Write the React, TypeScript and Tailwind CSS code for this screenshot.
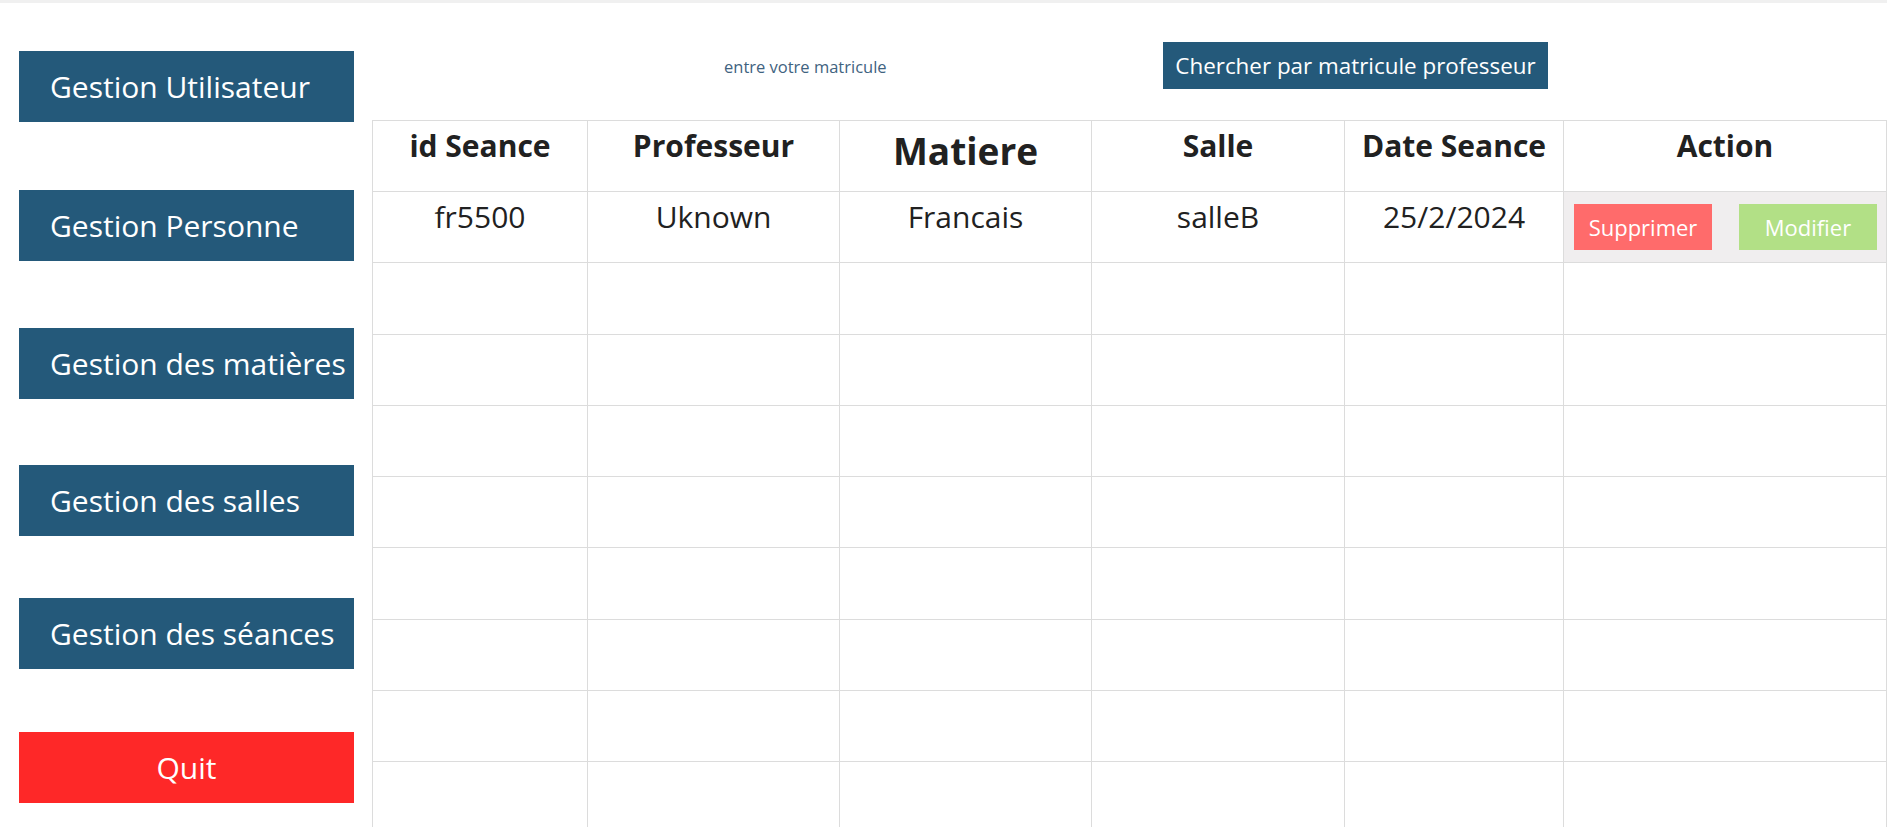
import React from 'react';

const navItems = [
  { label: 'Gestion Utilisateur', mt: 'mt-[48px]' },
  { label: 'Gestion Personne', mt: 'mt-[68px]' },
  { label: 'Gestion des matières', mt: 'mt-[67px]' },
  { label: 'Gestion des salles', mt: 'mt-[66px]' },
  { label: 'Gestion des séances', mt: 'mt-[62px]' },
];

const headers = ['id Seance', 'Professeur', 'Matiere', 'Salle', 'Date Seance', 'Action'];
const widths = ['w-[215px]', 'w-[252px]', 'w-[252px]', 'w-[253px]', 'w-[219px]', 'w-[323px]'];

const seances = [{ id: 'fr5500', prof: 'Uknown', matiere: 'Francais', salle: 'salleB', date: '25/2/2024' }];

const App: React.FC = () => {
  return (
    <div className="min-h-screen bg-white font-['Open_Sans',sans-serif] text-[#212121] overflow-hidden">
      <div className="h-[3px] bg-[#f0f0f0]" />
      <div className="flex">
        {/* sidebar */}
        <aside className="w-[372px] shrink-0 flex flex-col">
          {navItems.map((item) => (
            <button
              key={item.label}
              className={`${item.mt} ml-[19px] w-[335px] h-[71px] bg-[#24597a] text-white text-[30px] text-left pl-[31px] whitespace-nowrap`}
            >
              {item.label}
            </button>
          ))}
          <button className="mt-[63px] ml-[19px] w-[335px] h-[71px] bg-[#fe2828] text-white text-[30px] text-center">
            Quit
          </button>
        </aside>

        {/* main */}
        <main className="flex-1">
          <div className="h-[117px] flex items-start">
            <input
              readOnly
              placeholder="entre votre matricule"
              className="mt-[52px] ml-[352px] w-[180px] h-[24px] text-[16.5px] outline-none bg-transparent placeholder:text-[#3f6380]"
            />
            <button className="mt-[39px] ml-[259px] w-[385px] h-[47px] bg-[#24597a] text-white text-[22.4px] whitespace-nowrap">
              Chercher par matricule professeur
            </button>
          </div>

          <table className="border-collapse table-fixed w-[1514px]">
            <thead>
              <tr className="h-[71px]">
                {headers.map((h, i) => (
                  <th
                    key={h}
                    className={`${widths[i]} border border-[#dcdcdc] align-top font-bold leading-normal ${
                      h === 'Matiere' ? 'text-[37px] pt-[2px]' : 'text-[30px] pt-[2px]'
                    }`}
                  >
                    {h}
                  </th>
                ))}
              </tr>
            </thead>
            <tbody>
              {seances.map((s) => (
                <tr key={s.id} className="h-[71.3px]">
                  <td className="border border-[#dcdcdc] align-top text-center text-[30px] pt-[2px] leading-normal">{s.id}</td>
                  <td className="border border-[#dcdcdc] align-top text-center text-[30px] pt-[2px] leading-normal">{s.prof}</td>
                  <td className="border border-[#dcdcdc] align-top text-center text-[30px] pt-[2px] leading-normal">{s.matiere}</td>
                  <td className="border border-[#dcdcdc] align-top text-center text-[30px] pt-[2px] leading-normal">{s.salle}</td>
                  <td className="border border-[#dcdcdc] align-top text-center text-[30px] pt-[2px] leading-normal">{s.date}</td>
                  <td className="border border-[#dcdcdc] align-top bg-[#f0eeef] pt-[12px] pl-[10px]">
                    <div className="flex gap-[27px]">
                      <button className="w-[138px] h-[46px] bg-[#ff6b6b] text-white text-[22px]">Supprimer</button>
                      <button className="w-[138px] h-[46px] bg-[#b2e086] text-white text-[22px]">Modifier</button>
                    </div>
                  </td>
                </tr>
              ))}
              {Array.from({ length: 8 }).map((_, r) => (
                <tr key={r} className="h-[71.3px]">
                  {headers.map((h) => (
                    <td key={h} className="border border-[#dcdcdc]" />
                  ))}
                </tr>
              ))}
            </tbody>
          </table>
        </main>
      </div>
    </div>
  );
};

export default App;
